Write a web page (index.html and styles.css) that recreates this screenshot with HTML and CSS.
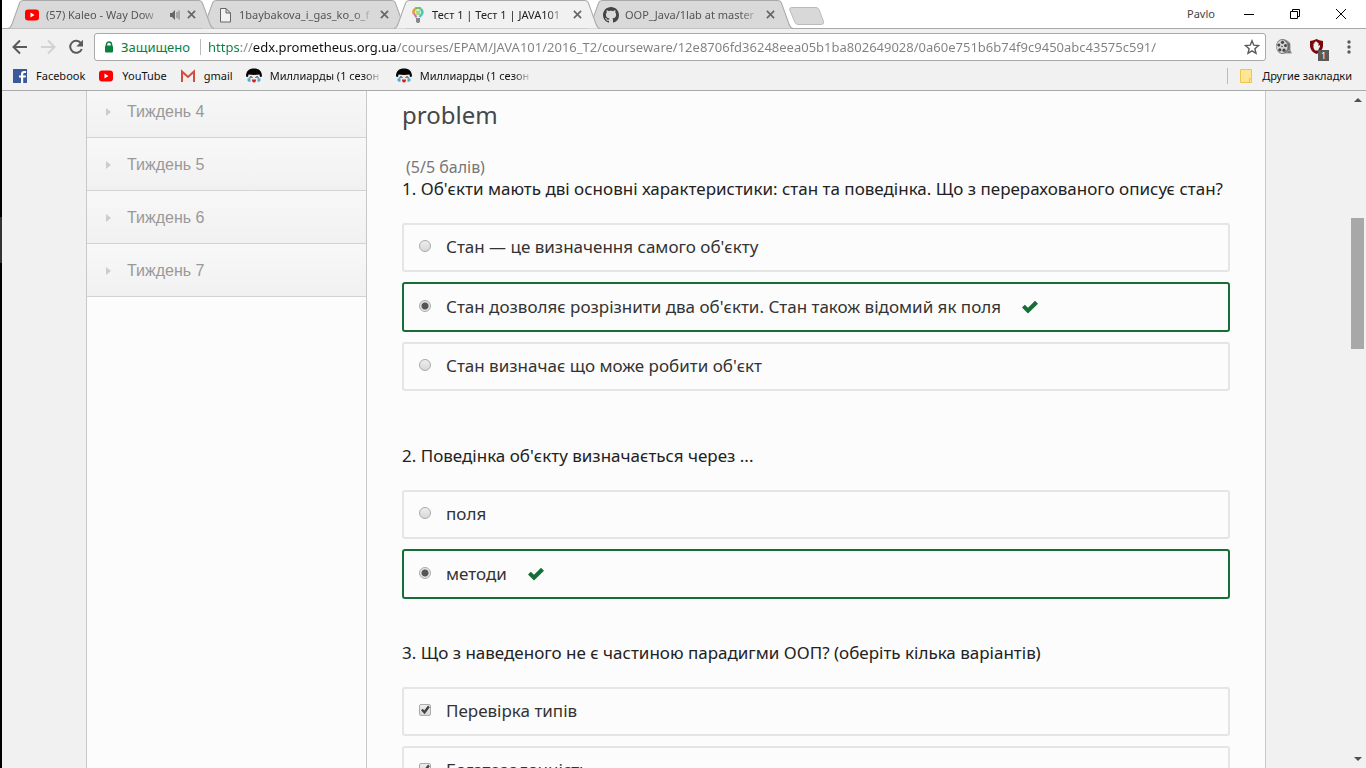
FILE: index.html
```html
<!DOCTYPE html>
<html lang="uk">
<head>
<meta charset="utf-8">
<title>Тест 1 | Тест 1 | JAVA101</title>
<link rel="stylesheet" href="styles.css">
</head>
<body>
<svg class="defs" aria-hidden="true">
  <symbol id="close" viewBox="0 0 10 10"><path d="M1 1l8 8M9 1l-8 8" fill="none" stroke="currentColor" stroke-width="1.8"/></symbol>
  <symbol id="youtube" viewBox="0 0 16 12"><rect x="1" y="0.5" width="14" height="11" rx="3" fill="#f00"/><path d="M6.500 3.500v5l4-2.500z" fill="#fff"/></symbol>
  <symbol id="face" viewBox="0 0 16 16"><path d="M2 8C2 4 4 3 8 3s6 1 6 5c0 5-2.500 7.500-6 7.500S2 13 2 8z" fill="#f6e9e4"/><path d="M0 8.500C0 3 3 .5 8 .5S16 3 16 8.500l-2 .5-.5-2.500c-3 .5-8 .5-11 0L2 9z" fill="#050505"/><path d="M3.500 9.500q1.500-1.500 3 0M9.500 9.500q1.500-1.500 3 0" fill="none" stroke="#222"/><path d="M1.500 10.500l3-.5v3.500q-2 1-3-1zM14.500 10.500l-3-.5v3.500q2 1 3-1z" fill="#3fb0e0"/><path d="M6 11.500h4q0 3-2 3t-2-3z" fill="#c9202b"/></symbol>
  <symbol id="tabshape" viewBox="0 0 205 29" preserveAspectRatio="none"><path d="M0 28.500C2 28 3 27 4 24L11.500 3Q12.500.5 15 .5H190Q192.500.5 193.500 3L201 24C202 27 203 28 205 28.500" stroke="#a9a9a9"/></symbol>
  <symbol id="tick" viewBox="0 0 18 14"><path d="M1 7.500L3.800 4.700L7 7.800L14 .8L17 3.700L7 13.500z" fill="#166e36"/></symbol>
</svg>
<div class="desktop-edge"><div class="edge-mark"></div></div>
<div class="window">
  <header class="chrome">
    <div class="tabstrip">
      <div class="tab tab-1"><svg class="shape"><use href="#tabshape"/></svg>
        <svg class="favicon"><use href="#youtube"/></svg><span class="tab-title">(57) Kaleo - Way Dow</span>
        <svg class="sound" viewBox="0 0 12 12"><path d="M1 4h2l3-3v10L3 8H1z" fill="#666"/><path d="M8 3v6M10 1.500v9" stroke="#777" fill="none"/></svg>
        <button class="close" aria-label="Закрыть"><svg><use href="#close"/></svg></button></div>
      <div class="tab tab-2"><svg class="shape"><use href="#tabshape"/></svg>
        <svg class="favicon" viewBox="0 0 16 16"><path d="M3.500 1.500H9L13.500 6v9h-10zM9 1.500V6h4.500" fill="#f3f3f3" stroke="#666"/></svg><span class="tab-title">1baybakova_i_gas_ko_o_f</span>
        <button class="close" aria-label="Закрыть"><svg><use href="#close"/></svg></button></div>
      <div class="tab tab-3 active"><svg class="shape"><use href="#tabshape"/></svg>
        <svg class="favicon" viewBox="0 0 16 16"><path d="M4 7Q2.500 4 5 2" stroke="#ec9a3e" stroke-width="2.500" fill="none"/><path d="M5 2Q8-.5 11 2" stroke="#72c45a" stroke-width="2.500" fill="none"/><path d="M11 2q2.500 3 .5 5.500L9.500 10" stroke="#49c6bd" stroke-width="2.500" fill="none"/><path d="M4 6.500l2.500 4" stroke="#ce74bf" stroke-width="2" fill="none"/><path d="M6 4l4 4M10 3.500L6.500 8" stroke="#a5d977" stroke-width="2"/><path d="M6 11h4v3.500l-1 1.500H7l-1-1.500z" fill="#888"/></svg><span class="tab-title">Тест 1 | Тест 1 | JAVA101</span>
        <button class="close" aria-label="Закрыть"><svg><use href="#close"/></svg></button></div>
      <div class="tab tab-4"><svg class="shape"><use href="#tabshape"/></svg>
        <svg class="favicon" viewBox="0 0 16 16"><path fill="#444" d="M8 0C3.580 0 0 3.580 0 8c0 3.540 2.290 6.530 5.470 7.590.4.070.55-.17.55-.38 0-.19-.01-.82-.01-1.490-2.010.37-2.530-.49-2.690-.94-.09-.23-.48-.94-.82-1.130-.28-.15-.68-.52-.01-.53.63-.01 1.080.58 1.230.82.72 1.210 1.870.87 2.330.66.07-.52.28-.87.51-1.070-1.780-.2-3.640-.89-3.640-3.950 0-.87.31-1.590.82-2.150-.08-.2-.36-1.020.08-2.120 0 0 .67-.21 2.200.82.640-.18 1.320-.27 2-.27s1.360.09 2 .27c1.530-1.040 2.200-.82 2.200-.82.44 1.100.16 1.920.08 2.120.51.56.82 1.270.82 2.150 0 3.070-1.870 3.750-3.650 3.950.29.25.54.73.54 1.480 0 1.070-.01 1.930-.01 2.200 0 .21.15.46.55.38A8.010 8.010 0 0 0 16 8c0-4.420-3.580-8-8-8z"/></svg><span class="tab-title">OOP_Java/1lab at master</span>
        <button class="close" aria-label="Закрыть"><svg><use href="#close"/></svg></button></div>
      <button class="newtab" aria-label="Новая вкладка"><svg viewBox="0 0 36 18"><path d="M2.500.5H27Q29 .5 30 2.500L34.500 14.500Q35 17.500 32.500 17.500H9Q7 17.500 6 15.500L.8 3Q.2.5 2.500.5z" fill="#d8d8d8" stroke="#bbb"/></svg></button>
      <div class="controls">
        <button class="profile">Pavlo</button>
        <button aria-label="Свернуть"><svg viewBox="0 0 12 12"><path d="M1 6.500h10" stroke="#000"/></svg></button>
        <button aria-label="Развернуть"><svg viewBox="0 0 12 12"><path d="M1.500 3.500h7v7h-7zM3.500 3.500v-2h7v7h-2" stroke="#000" fill="none"/></svg></button>
        <button aria-label="Закрыть окно"><svg viewBox="0 0 12 12"><path d="M1 1l10 10M11 1L1 11" stroke="#000"/></svg></button>
      </div>
    </div>
    <div class="toolbar">
      <button class="nav" aria-label="Назад"><svg viewBox="0 0 16 16"><path d="M15 8H2M8 1.500L1.500 8L8 14.500" fill="none" stroke="#5a5a5a" stroke-width="2"/></svg></button>
      <button class="nav" aria-label="Вперёд"><svg viewBox="0 0 16 16"><path d="M1 8h13M8 1.500L14.500 8L8 14.500" fill="none" stroke="#d2d2d2" stroke-width="2"/></svg></button>
      <button class="nav" aria-label="Обновить"><svg viewBox="0 0 16 16"><path d="M13.200 4.500A6 6 0 1 0 13.800 10" fill="none" stroke="#5a5a5a" stroke-width="2"/><path d="M15 .8v6.700H8.300z" fill="#5a5a5a"/></svg></button>
      <div class="omnibox">
        <svg class="lock" viewBox="0 0 10 12"><path d="M2.500 5V3.500a2.500 2.500 0 0 1 5 0V5" fill="none" stroke="#0b8043" stroke-width="1.500"/><rect x="1" y="4.500" width="8" height="7" rx="1" fill="#0b8043"/></svg>
        <label class="secure" for="url">Защищено</label>
        <input class="url" id="url" type="text" value="https://edx.prometheus.org.ua/courses/EPAM/JAVA101/2016_T2/courseware/12e8706fd36248eea05b1ba802649028/0a60e751b6b74f9c9450abc43575c591/">
        <button class="star" aria-label="Добавить в закладки"><svg viewBox="0 0 16 16"><path d="M8 1.800l1.800 4.400 4.700.4-3.600 3.100 1.100 4.600L8 11.800l-4 2.500 1.100-4.600L1.500 6.600l4.700-.4z" fill="none" stroke="#5a5a5a" stroke-width="1.400"/></svg></button>
      </div>
      <button class="ext" aria-label="Видео"><svg viewBox="0 0 18 18"><path d="M9 1.500Q14 2 15.500 6v6l1.500 3.500H10z" fill="#9a9a9a"/><ellipse cx="7.500" cy="8.500" rx="6.500" ry="7.500" fill="#777"/><ellipse cx="7" cy="8.500" rx="5.500" ry="6.500" fill="#d5d5d5"/><g fill="#444"><circle cx="7.500" cy="4.300" r="1.600"/><circle cx="3.800" cy="7" r="1.500"/><circle cx="4.800" cy="11.800" r="1.600"/><circle cx="9" cy="12.200" r="1.600"/><circle cx="10.500" cy="7.500" r="1.500"/><circle cx="7" cy="8.500" r=".8"/></g><path d="M14 5v7M12.500 14h3" stroke="#555"/></svg></button>
      <button class="ext" aria-label="Блокировщик"><svg viewBox="0 0 18 18"><path d="M2 3Q6 2.500 8.500 1Q11 2.500 15 3v5q0 5-6.500 8Q2 13 2 8z" fill="#7c070b"/><path d="M5.500 10V5.500h1V4h1v-.8h1V4h1v1h1v3l1.500-1v1.500L10 12.500H7z" fill="#eee"/></svg><span class="count">1</span></button>
      <button class="menu" aria-label="Меню"><svg viewBox="0 0 4 14"><g fill="#5a5a5a"><circle cx="2" cy="2" r="1.700"/><circle cx="2" cy="7" r="1.700"/><circle cx="2" cy="12" r="1.700"/></g></svg></button>
    </div>
    <nav class="bookmarks">
      <a href="#"><svg viewBox="0 0 16 16"><path d="M1 1h14v14H1z" fill="#3b5998"/><path d="M9 15V9.500H7v-2h2V6q0-3 3-3h2v2h-1.500q-1.300 0-1.300 1.300v1.200H14l-.4 2h-2.400V15z" fill="#fff"/></svg><span>Facebook</span></a>
      <a href="#"><svg><use href="#youtube"/></svg><span>YouTube</span></a>
      <a href="#"><svg viewBox="0 0 16 16"><path d="M1 3h14v11H1z" fill="#eee"/><path d="M2 14V3.500l6 5.500 6-5.500V14" fill="none" stroke="#d54b3d" stroke-width="2"/></svg><span>gmail</span></a>
      <a href="#"><svg><use href="#face"/></svg><span class="faded">Миллиарды (1 сезон</span></a>
      <a href="#"><svg><use href="#face"/></svg><span class="faded">Миллиарды (1 сезон</span></a>
      <a href="#" class="other"><svg viewBox="0 0 16 16"><path d="M2.500 1.500h11v13h-11z" fill="#ffe694" stroke="#edc64b"/><path d="M11.500 10.500h2v4h-2z" fill="#ffe694" stroke="#edc64b"/></svg><span>Другие закладки</span></a>
    </nav>
  </header>
  <div class="viewport">
    <div class="page">
      <nav class="weeks">
        <a href="#">Тиждень 4</a>
        <a href="#">Тиждень 5</a>
        <a href="#">Тиждень 6</a>
        <a href="#">Тиждень 7</a>
      </nav>
      <main class="content">
        <h1>problem</h1>
        <p class="score">(5/5 балів)</p>
        <fieldset class="first">
          <legend>1. Об'єкти мають дві основні характеристики: стан та поведінка. Що з перерахованого описує стан?</legend>
          <label class="option"><input type="radio" name="q1">Стан — це визначення самого об'єкту</label>
          <label class="option correct"><input type="radio" name="q1" checked>Стан дозволяє розрізнити два об'єкти. Стан також відомий як поля<svg><use href="#tick"/></svg></label>
          <label class="option"><input type="radio" name="q1">Стан визначає що може робити об'єкт</label>
        </fieldset>
        <fieldset class="second">
          <legend>2. Поведінка об'єкту визначається через ...</legend>
          <label class="option"><input type="radio" name="q2">поля</label>
          <label class="option correct"><input type="radio" name="q2" checked>методи<svg><use href="#tick"/></svg></label>
        </fieldset>
        <fieldset>
          <legend>3. Що з наведеного не є частиною парадигми ООП? (оберіть кілька варіантів)</legend>
          <label class="option"><input type="checkbox" checked>Перевірка типів</label>
          <label class="option"><input type="checkbox" checked>Багатозадачність</label>
        </fieldset>
      </main>
    </div>
    <div class="scrollbar" aria-hidden="true">
      <svg viewBox="0 0 8 4"><path d="M0 4L4 0L8 4z" fill="#505050"/></svg>
      <div class="track"><div class="thumb"></div></div>
      <svg viewBox="0 0 8 4"><path d="M0 0L4 4L8 0z" fill="#505050"/></svg>
    </div>
  </div>
</div>
</body>
</html>
```
FILE: styles.css
```css
* { box-sizing: border-box; }
body {
  margin: 0;
  height: 100vh;
  display: flex;
  overflow: hidden;
  background: #f1f1f1;
  color: #222;
  font: 11px "Noto Sans", "Open Sans", sans-serif;
}
button { border: 0; padding: 0; background: none; font: inherit; color: inherit; display: flex; align-items: center; justify-content: center; }
a { color: inherit; text-decoration: none; }
.defs { position: absolute; width: 0; height: 0; }
.desktop-edge { flex: none; width: 2px; background: #000; padding-top: 217px; }
.edge-mark { height: 46px; background: #333; }
.window { flex: 1; min-width: 0; display: flex; flex-direction: column; }

.chrome { flex: none; border-bottom: 1px solid #aaa; }
.tabstrip { display: flex; height: 29px; padding-left: 6px; background: #fff; box-shadow: inset 0 -1px #a9a9a9; }
.tab {
  position: relative;
  flex: none;
  width: 206px;
  height: 29px;
  margin-right: -13px;
  padding: 0 13px 0 16px;
  display: flex;
  align-items: center;
  color: #555;
}
.tab > * { position: relative; }
.tab .shape { position: absolute; inset: 0; width: 100%; height: 100%; fill: #d9d9d9; }
.tab.active .shape { fill: #f1f1f1; }
.tab.active { color: #222; }
.tab-1 { z-index: 3; }
.tab-2 { z-index: 2; }
.tab-3 { z-index: 4; }
.tab-4 { z-index: 1; }
.favicon { flex: none; width: 16px; height: 16px; margin-right: 6px; }
.tab-title {
  flex: 1;
  min-width: 0;
  overflow: hidden;
  white-space: nowrap;
  mask-image: linear-gradient(to left, transparent, #000 20px);
}
.sound { flex: none; width: 12px; height: 12px; margin-left: 6px; }
.close { flex: none; width: 20px; height: 20px; color: #666; }
.close svg { width: 9px; height: 9px; }
.newtab { z-index: 0; margin: 7px 0 0 9px; height: 18px; }
.newtab svg { width: 36px; height: 18px; }
.controls { margin-left: auto; display: flex; height: 27px; padding-right: 2px; }
.controls button { width: 46px; }
.controls svg { width: 12px; height: 12px; }
.controls .profile { color: #444; margin-right: 2px; }

.toolbar { display: flex; align-items: center; height: 36px; padding: 0 10px; }
.nav { width: 16px; height: 16px; margin-right: 12px; }
.nav:nth-child(3) { margin-right: 10px; }
.nav svg { width: 16px; height: 16px; }
.omnibox {
  flex: 1;
  display: flex;
  align-items: center;
  height: 28px;
  margin-right: 8px;
  padding: 0 5px 0 9px;
  border: 1px solid #a9a9a9;
  border-radius: 3px;
  background: #fff;
  font-size: 13px;
}
.lock { flex: none; width: 10px; height: 12px; margin-right: 7px; }
.secure { color: #0b8043; padding-right: 10px; border-right: 1px solid #bbb; line-height: 16px; }
.url {
  flex: 1;
  min-width: 0;
  border: 0;
  padding: 0 0 0 7px;
  font: inherit;
  color: #777;
  outline: 0;
  background: linear-gradient(to right, #0b8043 40px, #888 40px 52px, #111 52px 196px, #808080 196px);
  -webkit-background-clip: text;
  background-clip: text;
  -webkit-text-fill-color: transparent;
}
.star svg { width: 16px; height: 16px; }
.ext { position: relative; width: 20px; height: 20px; margin-right: 13px; }
.ext svg { width: 18px; height: 18px; }
.count { position: absolute; right: -2px; bottom: -4px; width: 11px; height: 11px; background: #5a5a5a; color: #fff; font-size: 9px; line-height: 11px; text-align: center; }
.menu { width: 14px; margin-left: 2px; }
.menu svg { width: 4px; height: 14px; }

.bookmarks { display: flex; align-items: center; height: 25px; padding: 0 14px 4px 10px; color: #111; }
.bookmarks a { display: flex; align-items: center; margin-right: 13px; white-space: nowrap; }
.bookmarks svg { flex: none; width: 16px; height: 16px; margin-right: 8px; }
.faded { width: 113px; overflow: hidden; mask-image: linear-gradient(to left, transparent, #000 20px); }
.bookmarks .other { margin: 0 0 0 auto; padding-left: 10px; border-left: 1px solid #bbb; }

.viewport { flex: 1; min-height: 0; display: flex; overflow: hidden; }
.page { flex: 1; max-width: 1180px; margin: 0 auto; display: flex; background: #fcfcfc; border: solid #c8c8c8; border-width: 0 1px; }
.weeks { flex: none; width: 280px; margin-top: -6px; border-right: 1px solid #c8c8c8; }
.weeks a {
  display: flex;
  align-items: center;
  height: 53px;
  padding: 2px 0 0 19px;
  border-bottom: 1px solid #d3d3d3;
  background: linear-gradient(#f8f8f8, #f1f1f1);
  color: #999;
  font: 16px "Liberation Sans", sans-serif;
}
.weeks a::before { content: ""; margin-right: 16px; border: solid transparent; border-width: 4px 0 4px 5px; border-left-color: #ccc; }
.content { flex: 1; min-width: 0; padding: 8px 35px 0; font-size: 17px; line-height: 22px; }
h1 { margin: 0 0 25px; font-size: 24px; line-height: 32px; font-weight: 400; color: #474747; }
.score { margin: 0; padding-left: 4px; font-size: 16px; color: #777; }
fieldset { margin: 0; padding: 0; border: 0; min-width: 0; }
.first { margin-bottom: 54px; }
.second { margin-bottom: 43px; }
legend { padding: 0; margin-bottom: 23px; }
.option {
  display: flex;
  align-items: center;
  height: 49px;
  margin-bottom: 10px;
  padding: 0 0 1px 15px;
  border: 2px solid #e5e5e5;
  border-radius: 3px;
  color: #333;
}
.option:last-child { margin-bottom: 0; }
.option.correct { height: 50px; padding-bottom: 0; border-color: #166e36; }
.option svg { width: 18px; height: 14px; margin-left: 20px; }
.option input {
  appearance: none;
  width: 12px;
  height: 12px;
  margin: 0 15px 2px 0;
  border: 1px solid #aaa;
  border-radius: 50%;
  background: linear-gradient(#eee, #d8d8d8);
}
.option input[type=radio]:checked { background: radial-gradient(circle, #555 0 3px, #e4e4e4 4px); }
.option input[type=checkbox] { border-radius: 2px; display: flex; }
.option input[type=checkbox]::before {
  content: "";
  flex: 1;
  background: #444;
  clip-path: polygon(10% 52%, 28% 38%, 42% 56%, 80% 5%, 98% 22%, 46% 92%);
}

.scrollbar { flex: none; width: 16px; display: flex; flex-direction: column; align-items: center; padding: 7px 0; background: #f1f1f1; }
.scrollbar svg { flex: none; width: 8px; height: 4px; }
.track { flex: 1; width: 100%; display: grid; grid-template-rows: 116fr 131fr 408fr; padding: 0 2px 0 1px; }
.thumb { grid-row: 2; background: #a8a8a8; }
```
